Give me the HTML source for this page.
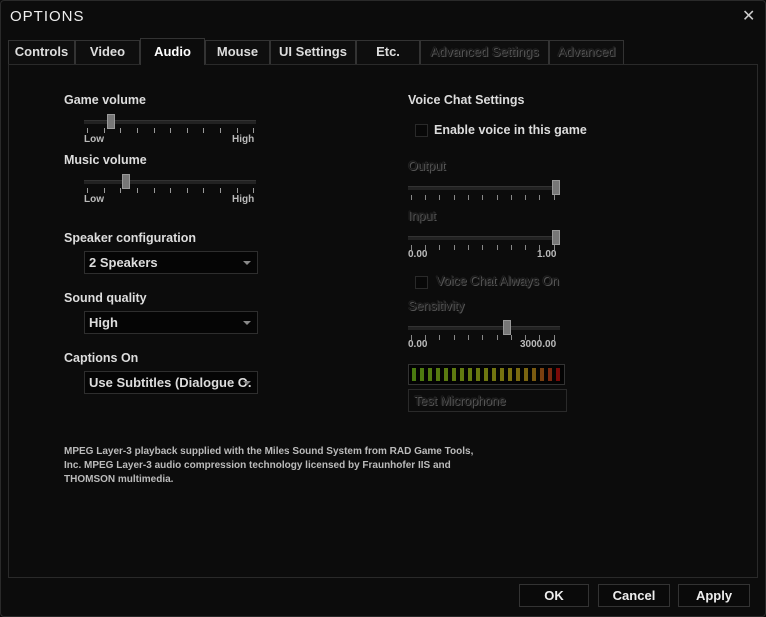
<!DOCTYPE html><html><head><style>
body{margin:0;width:766px;height:617px;background:#0b0b0b;overflow:hidden;font-family:"Liberation Sans",sans-serif;color:#e6e6e6;position:relative}
.a{position:absolute}
.win{left:0;top:0;width:764px;height:615px;border:1px solid #2a2a2a;border-radius:4px;background:#0c0c0c}
.tab{position:absolute;top:40px;height:24px;border:1px solid #333;border-bottom:none;box-sizing:border-box;font-size:13px;font-weight:bold;text-align:center;line-height:22px;color:#ddd;background:#0e0e0e}
.lbl{position:absolute;font-size:12.5px;font-weight:bold;color:#ddd;white-space:nowrap}
.sm{position:absolute;font-size:10px;font-weight:bold;color:#bbb}
.dis{color:#151515 !important;text-shadow:0 0 1px #666,1px 1px 0 #555;font-weight:normal}
.track{position:absolute;height:3px;background:#222;border-top:1px solid #333}
.thumb{position:absolute;width:8px;height:15px;background:#777;border:1px solid #999;box-sizing:border-box}
.dd{position:absolute;left:84px;width:174px;height:23px;border:1px solid #2e2e2e;box-sizing:border-box;background:#050505;font-size:13px;font-weight:bold;line-height:21px;padding-left:4px;color:#ddd;white-space:nowrap;overflow:hidden}
.dd:after{content:"";position:absolute;right:6px;top:9px;border:4px solid transparent;border-top:4px solid #888;border-bottom:none}
.btn{position:absolute;top:584px;height:23px;border:1px solid #333;box-sizing:border-box;background:#0a0a0a;font-size:13px;font-weight:bold;text-align:center;line-height:21px;color:#eee}
.cb{position:absolute;width:11px;height:11px;border:1px solid #2a2a2a;background:#080808}
</style></head><body>
<div class="a win"></div>
<div class="a" style="left:10px;top:8px;font-size:15px;letter-spacing:1px;color:#eee">OPTIONS</div>
<div class="a" style="left:742px;top:6px;font-size:16px;color:#ccc">✕</div>
<div class="a" style="left:8px;top:64px;width:750px;height:514px;border:1px solid #2a2a2a;box-sizing:border-box"></div>
<div class="tab" style="left:8px;width:67px">Controls</div>
<div class="tab" style="left:75px;width:65px">Video</div>
<div class="tab" style="left:140px;width:65px;top:38px;height:27px;background:#0c0c0c;color:#fff;line-height:26px">Audio</div>
<div class="tab" style="left:205px;width:65px">Mouse</div>
<div class="tab" style="left:270px;width:86px">UI Settings</div>
<div class="tab" style="left:356px;width:64px">Etc.</div>
<div class="tab dis" style="left:420px;width:129px">Advanced Settings</div>
<div class="tab dis" style="left:549px;width:75px">Advanced</div>

<div class="lbl" style="left:64px;top:93px">Game volume</div>
<div class="track" style="left:84px;top:120px;width:172px"></div>
<div class="thumb" style="left:107px;top:114px"></div>
<svg class="a" style="left:84px;top:128px" width="174" height="6"><g stroke="#999" stroke-width="1"><path d="M3.5 0v5M20.5 0v5M36.5 0v5M53.5 0v5M70.5 0v5M86.5 0v5M103.5 0v5M119.5 0v5M136.5 0v5M153.5 0v5M169.5 0v5"/></g></svg>
<div class="sm" style="left:84px;top:134px">Low</div><div class="sm" style="left:232px;top:134px">High</div>

<div class="lbl" style="left:64px;top:153px">Music volume</div>
<div class="track" style="left:84px;top:180px;width:172px"></div>
<div class="thumb" style="left:122px;top:174px"></div>
<svg class="a" style="left:84px;top:188px" width="174" height="6"><g stroke="#999"><path d="M3.5 0v5M20.5 0v5M36.5 0v5M53.5 0v5M70.5 0v5M86.5 0v5M103.5 0v5M119.5 0v5M136.5 0v5M153.5 0v5M169.5 0v5"/></g></svg>
<div class="sm" style="left:84px;top:194px">Low</div><div class="sm" style="left:232px;top:194px">High</div>

<div class="lbl" style="left:64px;top:231px">Speaker configuration</div>
<div class="dd" style="top:251px">2 Speakers</div>
<div class="lbl" style="left:64px;top:291px">Sound quality</div>
<div class="dd" style="top:311px">High</div>
<div class="lbl" style="left:64px;top:351px">Captions On</div>
<div class="dd" style="top:371px">Use Subtitles (Dialogue O.</div>

<div class="lbl" style="left:408px;top:93px">Voice Chat Settings</div>
<div class="cb" style="left:415px;top:124px"></div>
<div class="lbl" style="left:434px;top:123px">Enable voice in this game</div>
<div class="lbl dis" style="left:408px;top:159px">Output</div>
<div class="track" style="left:408px;top:186px;width:152px"></div>
<div class="thumb" style="left:552px;top:180px"></div>
<svg class="a" style="left:408px;top:195px" width="156" height="6"><g stroke="#888"><path d="M3.5 0v5M17.5 0v5M31.5 0v5M46.5 0v5M60.5 0v5M74.5 0v5M89.5 0v5M103.5 0v5M117.5 0v5M131.5 0v5M146.5 0v5"/></g></svg>
<div class="lbl dis" style="left:408px;top:209px">Input</div>
<div class="track" style="left:408px;top:236px;width:152px"></div>
<div class="thumb" style="left:552px;top:230px"></div>
<svg class="a" style="left:408px;top:245px" width="156" height="6"><g stroke="#888"><path d="M3.5 0v5M17.5 0v5M31.5 0v5M46.5 0v5M60.5 0v5M74.5 0v5M89.5 0v5M103.5 0v5M117.5 0v5M131.5 0v5M146.5 0v5"/></g></svg>
<div class="sm" style="left:408px;top:249px">0.00</div><div class="sm" style="left:537px;top:249px">1.00</div>
<div class="cb" style="left:415px;top:276px"></div>
<div class="lbl dis" style="left:436px;top:274px">Voice Chat Always On</div>
<div class="lbl dis" style="left:408px;top:299px">Sensitivity</div>
<div class="track" style="left:408px;top:326px;width:152px"></div>
<div class="thumb" style="left:503px;top:320px"></div>
<svg class="a" style="left:408px;top:335px" width="156" height="6"><g stroke="#888"><path d="M3.5 0v5M17.5 0v5M31.5 0v5M46.5 0v5M60.5 0v5M74.5 0v5M89.5 0v5M103.5 0v5M117.5 0v5M131.5 0v5M146.5 0v5"/></g></svg>
<div class="sm" style="left:408px;top:339px">0.00</div><div class="sm" style="left:520px;top:339px">3000.00</div>
<svg class="a" style="left:408px;top:364px" width="157" height="21"><rect x="0.5" y="0.5" width="156" height="20" fill="#030303" stroke="#333"/>
<g>
<rect x="4" y="4" width="4" height="13" fill="#4a7a10"/><rect x="12" y="4" width="4" height="13" fill="#4e7a10"/><rect x="20" y="4" width="4" height="13" fill="#537a10"/><rect x="28" y="4" width="4" height="13" fill="#567a10"/><rect x="36" y="4" width="4" height="13" fill="#5a7a10"/><rect x="44" y="4" width="4" height="13" fill="#5e7a10"/><rect x="52" y="4" width="4" height="13" fill="#627a10"/><rect x="60" y="4" width="4" height="13" fill="#667a10"/><rect x="68" y="4" width="4" height="13" fill="#6a7810"/><rect x="76" y="4" width="4" height="13" fill="#6e7610"/><rect x="84" y="4" width="4" height="13" fill="#727410"/><rect x="92" y="4" width="4" height="13" fill="#767210"/><rect x="100" y="4" width="4" height="13" fill="#7a7010"/><rect x="108" y="4" width="4" height="13" fill="#7a6a10"/><rect x="116" y="4" width="4" height="13" fill="#7a6410"/><rect x="124" y="4" width="4" height="13" fill="#7a5a10"/><rect x="132" y="4" width="4" height="13" fill="#7a4010"/><rect x="140" y="4" width="4" height="13" fill="#7a2a10"/><rect x="148" y="4" width="4" height="13" fill="#7a0a08"/>
</g></svg>
<div class="a" style="left:408px;top:389px;width:159px;height:23px;border:1px solid #2a2a2a;box-sizing:border-box"></div>
<div class="lbl dis" style="left:414px;top:394px">Test Microphone</div>

<div class="a" style="left:64px;top:445px;font-size:10px;font-weight:bold;color:#bbb;line-height:14px;width:440px">MPEG Layer-3 playback supplied with the Miles Sound System from RAD Game Tools,<br>Inc. MPEG Layer-3 audio compression technology licensed by Fraunhofer IIS and<br>THOMSON multimedia.</div>

<div class="btn" style="left:519px;width:70px">OK</div>
<div class="btn" style="left:598px;width:72px">Cancel</div>
<div class="btn" style="left:678px;width:72px">Apply</div>
</body></html>
